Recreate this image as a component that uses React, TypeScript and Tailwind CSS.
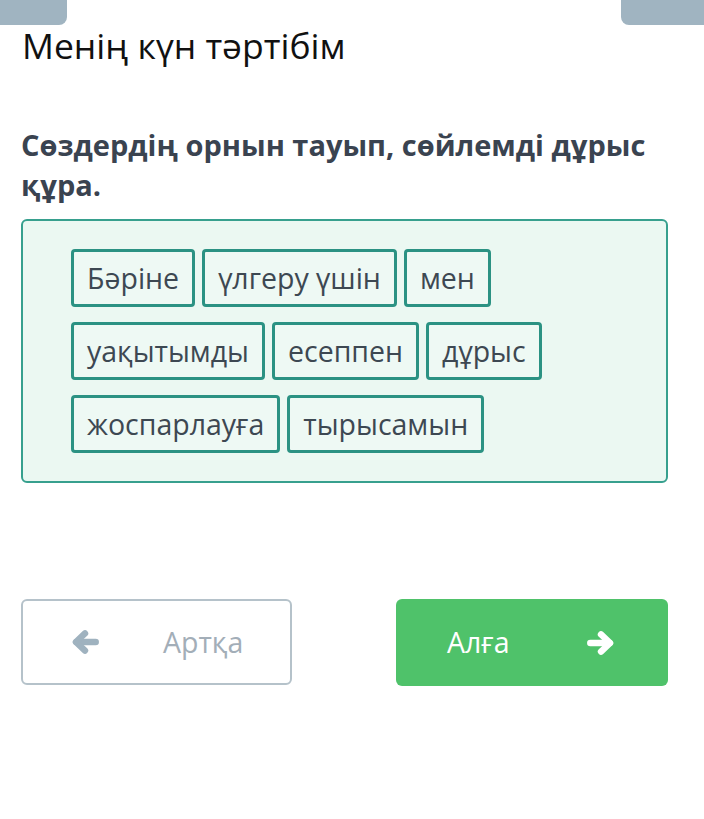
const rows = [
  ['Бәріне', 'үлгеру үшін', 'мен'],
  ['уақытымды', 'есеппен', 'дұрыс'],
  ['жоспарлауға', 'тырысамын'],
];

function Arrow({ dir, className }: { dir: 'left' | 'right'; className?: string }) {
  return (
    <svg viewBox="0 0 28 24" className={className} fill="none" stroke="currentColor" strokeLinecap="round" strokeLinejoin="round">
      <g transform={dir === 'left' ? 'translate(28 0) scale(-1 1)' : undefined}>
        <line x1="4" y1="12" x2="22" y2="12" strokeWidth="6" />
        <polyline points="14,4 22.5,12 14,20" strokeWidth="6" />
      </g>
    </svg>
  );
}

function Chip({ word }: { word: string }) {
  return (
    <div className="h-[58px] px-[13px] flex items-center border-[3px] border-[#2b9283] rounded-[4px] bg-[#eef9f4] text-[28.5px] text-[#3d4852] leading-none">
      {word}
    </div>
  );
}

export default function App() {
  return (
    <div className="relative w-[704px] h-[819px] bg-white overflow-hidden font-['Open_Sans',sans-serif]">
      {/* top tabs */}
      <div className="absolute left-0 top-0 w-[67px] h-[25px] bg-[#a0b4c1] rounded-br-[8px]"></div>
      <div className="absolute right-0 top-0 w-[83px] h-[25px] bg-[#a0b4c1] rounded-bl-[8px]"></div>

      <div className="px-[21px] pt-[22px]">
        <h1 className="text-[35.5px] leading-[46px] text-[#111] font-normal pl-[1px]">Менің күн тәртібім</h1>

        <p className="mt-[57px] text-[29px] leading-[40px] font-bold text-[#3a4350]">
          Сөздердің орнын тауып, сөйлемді дұрыс құра.
        </p>

        <div className="mt-[14px] w-[647px] border-2 border-[#37a08e] rounded-[6px] bg-[#ebf8f2] pl-[48px] pt-[28px] pb-[28px] flex flex-col gap-[15px]">
          {rows.map((row, i) => (
            <div key={i} className="flex gap-[7px]">
              {row.map((w) => (
                <Chip key={w} word={w} />
              ))}
            </div>
          ))}
        </div>

        <div className="mt-[116px] flex justify-between w-[647px]">
          <button className="w-[271px] h-[86px] border-2 border-[#b5c2ca] rounded-[6px] flex items-center pl-[47px] text-[#a3aeb8]">
            <Arrow dir="left" className="w-[30px] h-[26px] text-[#9fb2bf]" />
            <span className="ml-[63px] text-[28.5px]">Артқа</span>
          </button>
          <button className="w-[272px] h-[87px] bg-[#4fc26a] rounded-[6px] flex items-center pl-[51px] pr-[52px] justify-between text-white">
            <span className="text-[28.5px]">Алға</span>
            <Arrow dir="right" className="w-[30px] h-[26px]" />
          </button>
        </div>
      </div>
    </div>
  );
}
